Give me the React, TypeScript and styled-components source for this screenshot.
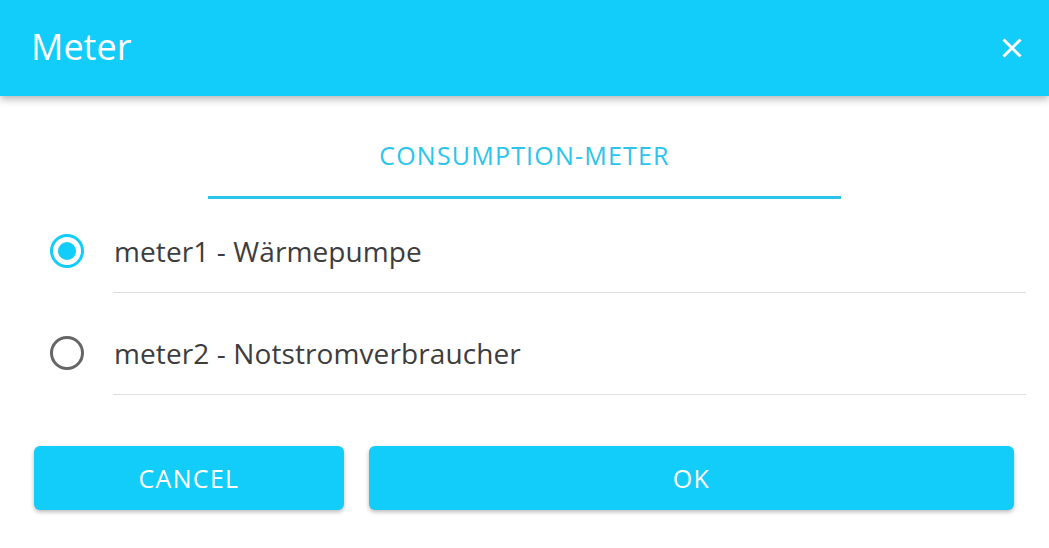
import React, { useState } from "react";
import styled, { createGlobalStyle } from "styled-components";

const Global = createGlobalStyle`
  html, body { margin: 0; padding: 0; background: #ffffff; }
  body { font-family: "Open Sans", "Noto Sans", sans-serif; }
  * { box-sizing: border-box; }
`;

const Dialog = styled.div`
  width: 1049px;
  height: 548px;
  background: #ffffff;
  display: flex;
  flex-direction: column;
  overflow: hidden;
`;

const Header = styled.header`
  position: relative;
  z-index: 1;
  height: 96px;
  flex: 0 0 96px;
  background: #12ccfa;
  display: flex;
  align-items: center;
  justify-content: space-between;
  padding: 0 24px 0 31px;
  box-shadow: 0 3px 8px rgba(0, 0, 0, 0.3);
`;

const Title = styled.h1`
  margin: 0;
  font-size: 36px;
  font-weight: 400;
  color: #ffffff;
  line-height: 1;
  padding-bottom: 2px;
`;

const CloseButton = styled.button`
  border: 0;
  background: transparent;
  padding: 0;
  width: 26px;
  height: 26px;
  display: flex;
  align-items: center;
  justify-content: center;
  cursor: pointer;
`;

const Body = styled.div`
  padding: 20px 23px 0 34px;
  display: flex;
  flex-direction: column;
`;

const Tabs = styled.div`
  display: flex;
  justify-content: center;
  padding-right: 11px;
`;

const Tab = styled.div<{ $active?: boolean }>`
  width: 633px;
  height: 83px;
  display: flex;
  align-items: center;
  justify-content: center;
  padding-bottom: 3px;
  font-size: 25px;
  letter-spacing: 1.2px;
  color: #2bc4ea;
  border-bottom: 3px solid ${(p) => (p.$active ? "#2bc4ea" : "transparent")};
`;

const List = styled.div`
  margin-top: 11px;
  display: flex;
  flex-direction: column;
  gap: 19px;
`;

const Row = styled.label`
  display: flex;
  align-items: stretch;
  cursor: pointer;
`;

const RadioCell = styled.div`
  width: 79px;
  padding-left: 16px;
  display: flex;
  align-items: center;
  padding-bottom: 1px;
`;

const RadioCircle = styled.span<{ $checked: boolean }>`
  width: 34px;
  height: 34px;
  border-radius: 50%;
  border: 3px solid ${(p) => (p.$checked ? "#12ccfa" : "#666666")};
  display: flex;
  align-items: center;
  justify-content: center;
  &::after {
    content: "";
    width: 18px;
    height: 18px;
    border-radius: 50%;
    background: #12ccfa;
    display: ${(p) => (p.$checked ? "block" : "none")};
  }
`;

const Label = styled.div`
  flex: 1;
  height: 83px;
  display: flex;
  align-items: center;
  padding-left: 1px;
  padding-bottom: 1px;
  border-bottom: 1px solid #dddddd;
  font-size: 28px;
  letter-spacing: 0.1px;
  color: #3d3d3d;
`;

const Actions = styled.div`
  margin-top: 51px;
  margin-right: 12px;
  display: grid;
  grid-template-columns: 310px 1fr;
  gap: 25px;
`;

const Button = styled.button`
  height: 64px;
  border: 0;
  border-radius: 6px;
  background: #12ccfa;
  color: #ffffff;
  font-family: "Open Sans", "Noto Sans", sans-serif;
  font-size: 25px;
  letter-spacing: 1.3px;
  font-weight: 400;
  box-shadow: 0 2px 4px rgba(0, 0, 0, 0.28);
  cursor: pointer;
  padding: 0 0 0;
`;

const meters = [
  { id: "meter1", name: "Wärmepumpe" },
  { id: "meter2", name: "Notstromverbraucher" },
];

export default function App() {
  const [selected, setSelected] = useState("meter1");
  return (
    <Dialog>
      <Global />
      <Header>
        <Title>Meter</Title>
        <CloseButton aria-label="close">
          <svg width="20" height="20" viewBox="0 0 20 20">
            <path d="M1.5 1.5 L18.5 18.5 M18.5 1.5 L1.5 18.5" stroke="#ffffff" strokeWidth="3" strokeLinecap="butt" />
          </svg>
        </CloseButton>
      </Header>
      <Body>
        <Tabs>
          <Tab $active>CONSUMPTION-METER</Tab>
        </Tabs>
        <List>
          {meters.map((m) => (
            <Row key={m.id} onClick={() => setSelected(m.id)}>
              <RadioCell>
                <RadioCircle $checked={selected === m.id} />
              </RadioCell>
              <Label>
                {m.id} - {m.name}
              </Label>
            </Row>
          ))}
        </List>
        <Actions>
          <Button>CANCEL</Button>
          <Button>OK</Button>
        </Actions>
      </Body>
    </Dialog>
  );
}
